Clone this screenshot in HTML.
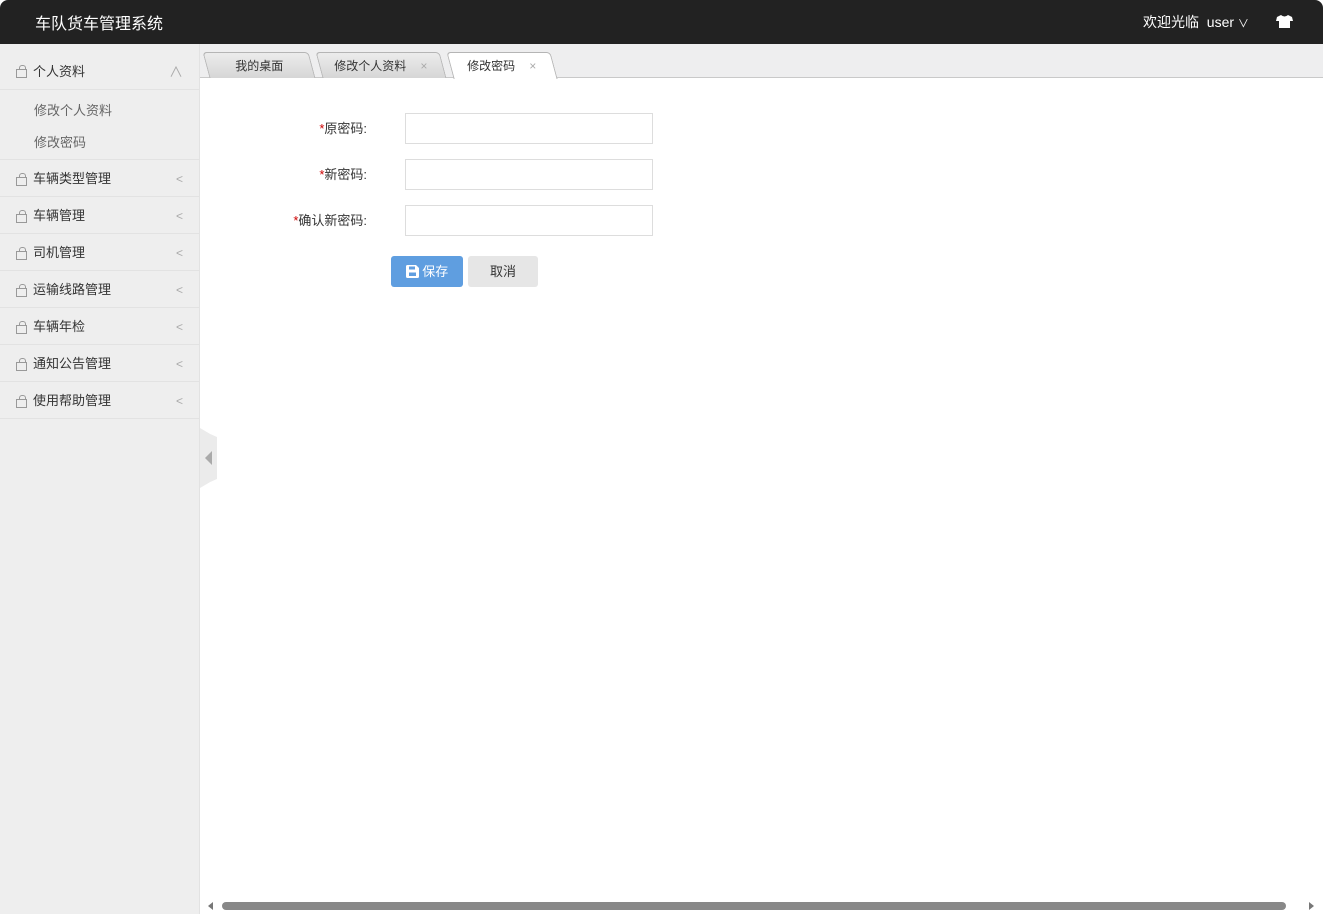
<!DOCTYPE html>
<html><head><meta charset="utf-8"><style>
*{margin:0;padding:0;box-sizing:border-box}
body{width:1323px;height:914px;overflow:hidden;background:#fff;font-family:"Liberation Sans","Noto Sans CJK SC",sans-serif;font-size:13px;color:#333;position:relative}
.top{position:absolute;left:0;top:0;width:1323px;height:44px;background:#222;border-radius:8px 8px 0 0}
.top .t{position:absolute;left:35px;top:10px;color:#fff;font-size:16px}
.top .r{position:absolute;left:1143px;top:12px;color:#fff;font-size:14px}
.side{position:absolute;left:0;top:44px;width:200px;height:870px;background:#eeeeee;border-right:1px solid #e2e2e2}
.it{height:37px;border-bottom:1px solid #e2e2e2;position:relative;line-height:38px;padding-left:33px;font-size:13px;color:#333}
.it .ic{position:absolute;left:16px;top:17px;width:11px;height:9px;border:1px solid #999}
.it .ic:before{content:"";position:absolute;left:2px;top:-5px;width:5px;height:4px;border:1px solid #999;border-bottom:0;border-radius:3px 3px 0 0}
.it .ar{position:absolute;right:16px;top:0;color:#aaa;font-size:12px}
.sub{padding:0 0 0 34px;color:#666;line-height:32px;font-size:13px}
.tabs{position:absolute;left:200px;top:44px;width:1123px;height:34px;background:#eeeeef;border-bottom:1px solid #c9c9c9}
.tab{position:absolute;top:8px;height:26px;line-height:26px;font-size:12px;color:#333;text-align:center;background:linear-gradient(#ececec,#d6d6d6);border:1px solid #b5b5b5;border-bottom:0;border-radius:4px 4px 0 0;transform:skewX(15deg)}
.tab span{display:inline-block;transform:skewX(-15deg)}
.tab.on{background:#fff;height:27px}
.x{color:#aaa;margin-left:14px}
.lbl{position:absolute;width:167px;left:200px;text-align:right;font-size:13px;color:#333}
.lbl b{color:#c00;font-weight:normal}
.in{position:absolute;left:405px;width:248px;height:31px;border:1px solid #ddd;background:#fff}
.btn{position:absolute;top:256px;height:31px;border-radius:3px;line-height:31px;text-align:center;font-size:13px}
</style></head><body>
<div class="top"><div class="t">车队货车管理系统</div><div class="r">欢迎光临&nbsp;&nbsp;user <span style="font-size:11px">&#x2228;</span></div>
<svg style="position:absolute;left:1276px;top:15px" width="17" height="13" viewBox="0 0 17 13"><path d="M5 0 L1 2 L0 6 L3 6 L3 13 L14 13 L14 6 L17 6 L16 2 L12 0 Q8.5 3 5 0Z" fill="#fff"/></svg></div>
<div class="side">
<div class="it" style="height:46px;line-height:56px"><i class="ic" style="top:25px"></i>个人资料<span class="ar" style="font-size:14px">&#x2227;</span></div>
<div style="border-bottom:1px solid #e2e2e2;padding:5px 0 0"><div class="sub">修改个人资料</div><div class="sub">修改密码</div></div>
<div class="it"><i class="ic"></i>车辆类型管理<span class="ar">&lt;</span></div>
<div class="it"><i class="ic"></i>车辆管理<span class="ar">&lt;</span></div>
<div class="it"><i class="ic"></i>司机管理<span class="ar">&lt;</span></div>
<div class="it"><i class="ic"></i>运输线路管理<span class="ar">&lt;</span></div>
<div class="it"><i class="ic"></i>车辆年检<span class="ar">&lt;</span></div>
<div class="it"><i class="ic"></i>通知公告管理<span class="ar">&lt;</span></div>
<div class="it"><i class="ic"></i>使用帮助管理<span class="ar">&lt;</span></div>
</div>
<div style="position:absolute;left:200px;top:428px;width:17px;height:60px;background:#ebebeb;clip-path:polygon(0 0,60% 10%,100% 15%,100% 85%,60% 90%,0 100%)"></div>
<div style="position:absolute;left:205px;top:451px;width:0;height:0;border-top:7px solid transparent;border-bottom:7px solid transparent;border-right:7px solid #aaa"></div>
<div class="tabs">
<div class="tab" style="left:6px;width:106px"><span>我的桌面</span></div>
<div class="tab" style="left:119px;width:124px"><span>修改个人资料<i class="x">×</i></span></div>
<div class="tab on" style="left:250px;width:104px"><span>修改密码<i class="x">×</i></span></div>
</div>
<div class="lbl" style="top:118px"><b>*</b>原密码:</div><div class="in" style="top:113px"></div>
<div class="lbl" style="top:164px"><b>*</b>新密码:</div><div class="in" style="top:159px"></div>
<div class="lbl" style="top:210px"><b>*</b>确认新密码:</div><div class="in" style="top:205px"></div>
<div class="btn" style="left:391px;width:72px;background:#5f9ee0;color:#fff"><svg width="13" height="13" viewBox="0 0 13 13" style="vertical-align:-2px"><path d="M0 1.5Q0 0 1.5 0H10L13 3V11.5Q13 13 11.5 13H1.5Q0 13 0 11.5Z" fill="#fff"/><rect x="3" y="1.5" width="6" height="3" fill="#5f9ee0"/><rect x="3" y="7.5" width="7" height="3.5" fill="#5f9ee0"/></svg> 保存</div>
<div class="btn" style="left:468px;width:70px;background:#e6e6e6;color:#333">取消</div>
<div style="position:absolute;left:222px;top:902px;width:1064px;height:8px;border-radius:4px;background:#888"></div>
<div style="position:absolute;left:208px;top:902px;border-top:4px solid transparent;border-bottom:4px solid transparent;border-right:5px solid #777"></div>
<div style="position:absolute;left:1309px;top:902px;border-top:4px solid transparent;border-bottom:4px solid transparent;border-left:5px solid #777"></div>
</body></html>
